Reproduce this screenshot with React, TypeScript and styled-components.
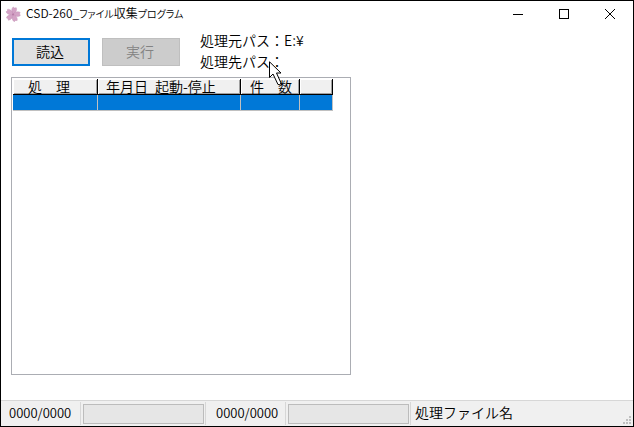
import React from "react";
import styled, { createGlobalStyle } from "styled-components";

const GlobalStyle = createGlobalStyle`
  *, *::before, *::after { box-sizing: border-box; }
  body { margin: 0; }
`;

const Window = styled.div`
  position: relative;
  display: flex;
  flex-direction: column;
  min-height: 100vh;
  border: 1px solid #000;
  background: #fff;
  color: #000;
  font-family: "Noto Sans CJK JP", sans-serif;
  font-size: 14px;
  font-weight: 350;
  line-height: 21px;
`;

const TitleBar = styled.header`
  display: flex;
  align-items: center;
  height: 25px;
  padding-left: 4px;
`;

const Title = styled.h1`
  flex: 1;
  margin: 0 0 0 5px;
  font-family: "Noto Sans CJK JP", sans-serif;
  font-size: 12px;
  font-weight: inherit;
  line-height: 24px;
  white-space: nowrap;
`;

const Kana = styled.span`
  font-size: 10px;
  font-feature-settings: "palt";
`;

const CaptionButton = styled.button`
  display: grid;
  place-items: center;
  width: 46px;
  height: 25px;
  padding: 0;
  border: 0;
  background: transparent;
`;

const Toolbar = styled.div`
  display: flex;
  align-items: flex-start;
  gap: 12px;
  padding: 4px 11px 0;
`;

const ToolButton = styled.button`
  width: 78px;
  height: 28px;
  margin-top: 8px;
  padding: 0 2px 2px 0;
  border: 2px solid #0078d7;
  background: #e1e1e1;
  color: #000;
  font: inherit;
  line-height: 22px;

  &:disabled {
    border: 1px solid #bfbfbf;
    background: #ccc;
    color: #838383;
  }
`;

const PathList = styled.div`
  margin-left: 8px;
  white-space: nowrap;
`;

const Content = styled.main`
  display: flex;
  flex: 1;
  padding: 5px 10px 25px;
`;

const GridFrame = styled.div`
  flex: 0 1 340px;
  padding: 1px;
  border: 1px solid #abadb3;
`;

const Grid = styled.table`
  border-collapse: separate;
  border-spacing: 0;
  table-layout: fixed;
  width: 320px;
`;

const HeadCell = styled.th<{ $width: number; $indent: number }>`
  width: ${(p) => p.$width}px;
  height: 16px;
  padding: 0 0 0 ${(p) => p.$indent}px;
  border-right: 1px solid #000;
  border-bottom: 1px solid #000;
  background: #f0f0f0;
  box-shadow: inset 1px 1px 0 #fff, inset -1px -1px 0 #a0a0a0;
  font-weight: inherit;
  line-height: 15px;
  text-align: left;
  white-space: pre;
`;

const Cell = styled.td`
  height: 16px;
  padding: 0;
  border-right: 1px solid #c0c0c0;
  border-bottom: 1px solid #c0c0c0;
  background: #0078d7;
`;

const StatusBar = styled.footer`
  display: flex;
  height: 26px;
  border-top: 1px solid #d7d7d7;
  background: #f0f0f0;
`;

const CountPanel = styled.label<{ $indent: number }>`
  width: 80px;
  margin: 1px 0;
  padding-left: ${(p) => p.$indent}px;
  border-right: 1px solid #d7d7d7;
  font-size: 13px;
  line-height: 22px;
`;

const BarPanel = styled.div`
  display: flex;
  width: 125px;
  margin: 1px 0;
  padding: 2px 1px 1px 2px;
  border-right: 1px solid #d7d7d7;
`;

const Bar = styled.progress`
  appearance: none;
  width: 100%;
  height: 20px;
  border: 1px solid #bcbcbc;
  background: #e6e6e6;

  &::-webkit-progress-bar { background: #e6e6e6; }
  &::-webkit-progress-value { background: #06b025; }
`;

const FilePanel = styled.div`
  flex: 1;
  padding-left: 4px;
  line-height: 23px;
  white-space: nowrap;
`;

const Grip = styled.svg`
  align-self: flex-end;
  margin: 0 2px 2px 0;
`;

const Pointer = styled.svg`
  position: absolute;
  left: 268px;
  top: 60px;
  pointer-events: none;
`;

const columns = [
  { label: "処　理", width: 85, indent: 15 },
  { label: "年月日\u2002起動-停止", width: 143, indent: 8 },
  { label: "件　数", width: 59, indent: 9 },
  { label: "", width: 33, indent: 0 },
];

const gripDots = [[6, 0], [3, 3], [6, 3], [0, 6], [3, 6], [6, 6]];

const Blossom = () => (
  <svg width="16" height="16" viewBox="0 0 16 16" aria-hidden="true">
    {[14, 86, 158, 230, 302].map((angle) => (
      <path
        key={angle}
        d="M8 8.6C6.2 7.2 4.6 3.4 6.5 1.1L8 1.9L9.5 1.1C11.4 3.4 9.8 7.2 8 8.6Z"
        transform={`rotate(${angle} 8 8.4)`}
        fill="#d4a3c6"
        stroke="#c08fb3"
        strokeWidth="0.4"
      />
    ))}
    <circle cx="8" cy="8.4" r="1" fill="#b87aa8" />
  </svg>
);

export default function App() {
  return (
    <>
      <GlobalStyle />
      <Window>
        <TitleBar>
          <Blossom />
          <Title>
            CSD-260_<Kana>ファイル</Kana>収集<Kana>プログラム</Kana>
          </Title>
          <CaptionButton type="button" aria-label="最小化">
            <svg width="10" height="10" shapeRendering="crispEdges">
              <path d="M0 5.5H10" stroke="#000" />
            </svg>
          </CaptionButton>
          <CaptionButton type="button" aria-label="最大化">
            <svg width="10" height="10" shapeRendering="crispEdges">
              <rect x="0.5" y="0.5" width="9" height="9" fill="none" stroke="#000" />
            </svg>
          </CaptionButton>
          <CaptionButton type="button" aria-label="閉じる">
            <svg width="10" height="10">
              <path d="M0 0L10 10M10 0L0 10" stroke="#000" />
            </svg>
          </CaptionButton>
        </TitleBar>
        <Toolbar>
          <ToolButton type="button">読込</ToolButton>
          <ToolButton type="button" disabled>実行</ToolButton>
          <PathList>
            <div>処理元パス：E:¥</div>
            <div>処理先パス：</div>
          </PathList>
        </Toolbar>
        <Content>
          <GridFrame>
            <Grid>
              <thead>
                <tr>
                  {columns.map((c, i) => (
                    <HeadCell key={i} scope="col" $width={c.width} $indent={c.indent}>
                      {c.label}
                    </HeadCell>
                  ))}
                </tr>
              </thead>
              <tbody>
                <tr>
                  {columns.map((_, i) => (
                    <Cell key={i} />
                  ))}
                </tr>
              </tbody>
            </Grid>
          </GridFrame>
        </Content>
        <StatusBar>
          <CountPanel htmlFor="read-progress" $indent={8}>0000/0000</CountPanel>
          <BarPanel>
            <Bar id="read-progress" value={0} max={100} />
          </BarPanel>
          <CountPanel htmlFor="run-progress" $indent={10}>0000/0000</CountPanel>
          <BarPanel>
            <Bar id="run-progress" value={0} max={100} />
          </BarPanel>
          <FilePanel>処理ファイル名</FilePanel>
          <Grip width="8" height="8" aria-hidden="true" shapeRendering="crispEdges">
            {gripDots.map(([x, y]) => (
              <rect key={`${x}-${y}`} x={x} y={y} width="2" height="2" fill="#bfbfbf" />
            ))}
          </Grip>
        </StatusBar>
        <Pointer width="16" height="26" viewBox="0 0 16 26" aria-hidden="true">
          <path
            d="M0.5 0.8V16.5L4 13L9 23.5Q11 24.5 12 22L7.5 12H12Z"
            fill="#fff"
            stroke="#000"
          />
        </Pointer>
      </Window>
    </>
  );
}
